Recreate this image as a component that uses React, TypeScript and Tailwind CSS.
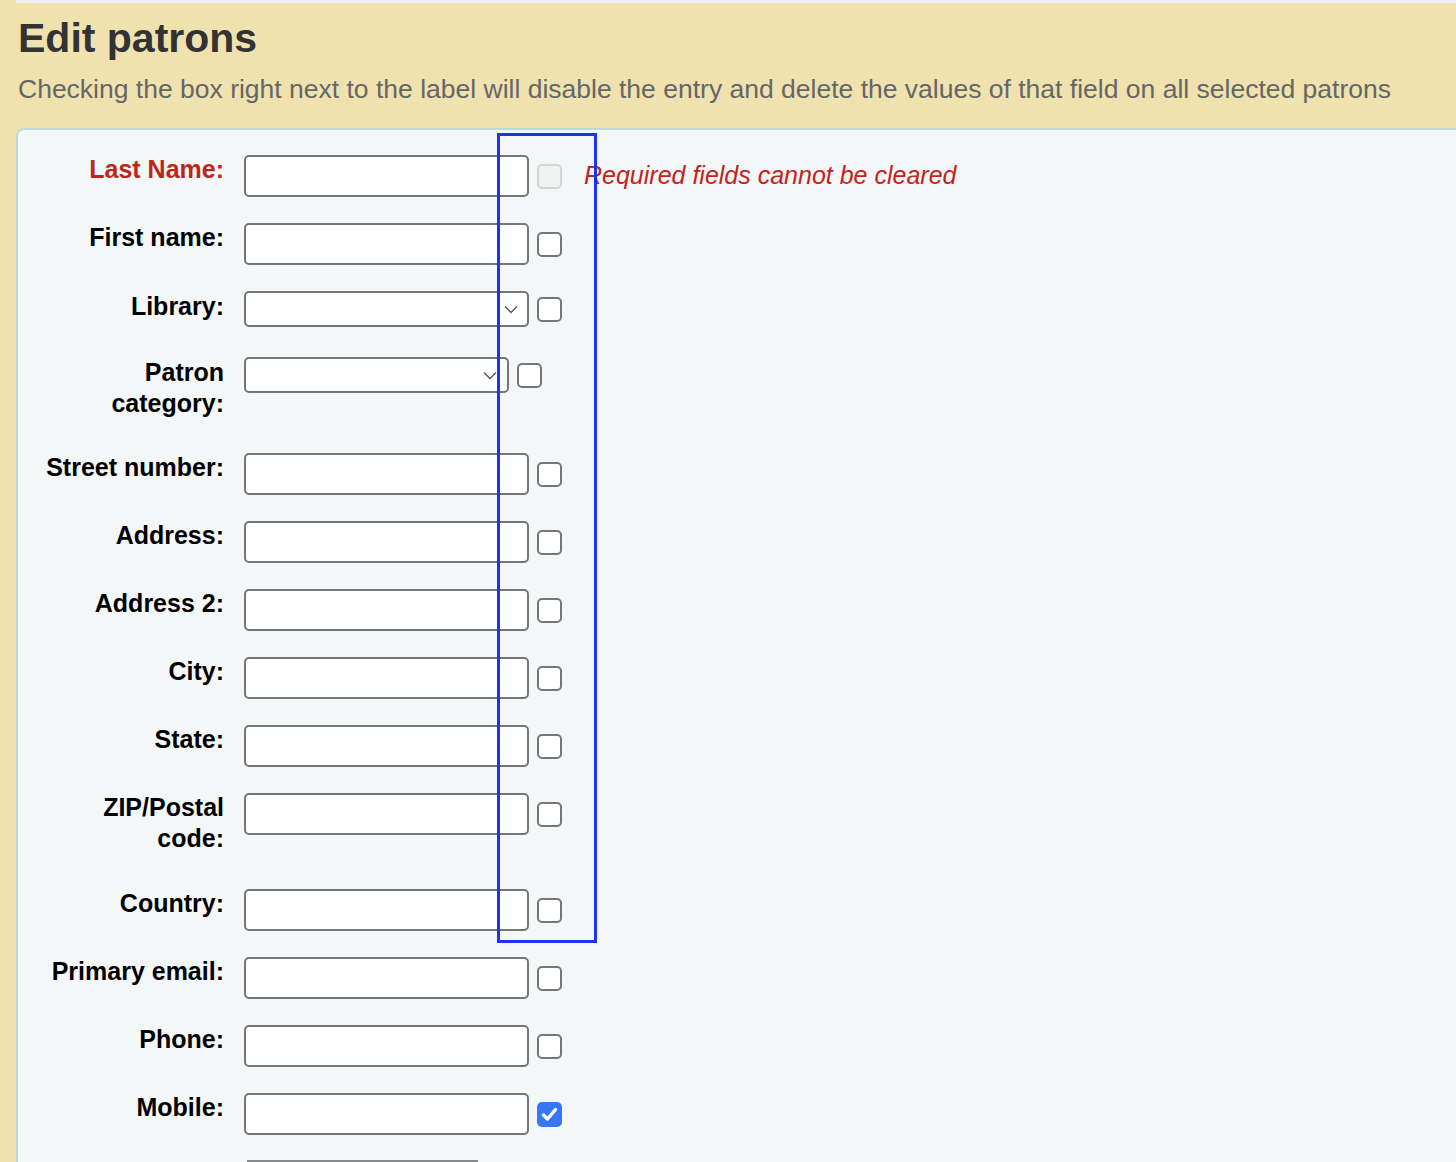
import React from 'react';

type Row = {
  label: React.ReactNode;
  kind: 'input' | 'select' | 'selectNarrow' | 'stub';
  pitch: string;
  box: 'off' | 'disabled' | 'on' | 'none';
  required?: boolean;
};

const rows: Row[] = [
  { label: 'Last Name:', kind: 'input', pitch: 'h-[68px]', box: 'disabled', required: true },
  { label: 'First name:', kind: 'input', pitch: 'h-[68px]', box: 'off' },
  { label: 'Library:', kind: 'select', pitch: 'h-[66px]', box: 'off' },
  { label: <>Patron<br />category:</>, kind: 'selectNarrow', pitch: 'h-[96px]', box: 'off' },
  { label: 'Street number:', kind: 'input', pitch: 'h-[68px]', box: 'off' },
  { label: 'Address:', kind: 'input', pitch: 'h-[68px]', box: 'off' },
  { label: 'Address 2:', kind: 'input', pitch: 'h-[68px]', box: 'off' },
  { label: 'City:', kind: 'input', pitch: 'h-[68px]', box: 'off' },
  { label: 'State:', kind: 'input', pitch: 'h-[68px]', box: 'off' },
  { label: <>ZIP/Postal<br />code:</>, kind: 'input', pitch: 'h-[96px]', box: 'off' },
  { label: 'Country:', kind: 'input', pitch: 'h-[68px]', box: 'off' },
  { label: 'Primary email:', kind: 'input', pitch: 'h-[68px]', box: 'off' },
  { label: 'Phone:', kind: 'input', pitch: 'h-[68px]', box: 'off' },
  { label: 'Mobile:', kind: 'input', pitch: 'h-[67px]', box: 'on' },
  { label: '', kind: 'stub', pitch: 'h-[68px]', box: 'none' },
];

function Chevron() {
  return (
    <svg width="14" height="9" viewBox="0 0 14 9" fill="none">
      <path d="M1 1.5 L7 7.5 L13 1.5" stroke="#555" strokeWidth="1.4" />
    </svg>
  );
}

function Checkbox({ state }: { state: Row['box'] }) {
  if (state === 'none') return null;
  if (state === 'on') {
    return (
      <div className="w-[25px] h-[25px] rounded-[5px] bg-[#3478f6] flex items-center justify-center shrink-0">
        <svg width="17" height="15" viewBox="0 0 17 15" fill="none">
          <path d="M2.5 8 L6.5 12 L14.5 2.5" stroke="#fff" strokeWidth="3.4" strokeLinecap="round" strokeLinejoin="round" />
        </svg>
      </div>
    );
  }
  if (state === 'disabled') {
    return <div className="w-[25px] h-[25px] rounded-[5px] border-2 border-[#d4d4d4] bg-[#f1f2f2] shrink-0" />;
  }
  return <div className="w-[25px] h-[25px] rounded-[5px] border-2 border-[#767676] bg-white shrink-0" />;
}

function Control({ kind }: { kind: Row['kind'] }) {
  if (kind === 'select') {
    return (
      <div className="w-[285px] h-[36px] rounded-[5px] border-2 border-[#767676] bg-white flex items-center justify-end pr-[9px] shrink-0">
        <Chevron />
      </div>
    );
  }
  if (kind === 'selectNarrow') {
    return (
      <div className="w-[265px] h-[36px] rounded-[5px] border-2 border-[#767676] bg-white flex items-center justify-end pr-[10px] shrink-0">
        <Chevron />
      </div>
    );
  }
  if (kind === 'stub') {
    return <div className="ml-[3px] w-[231px] h-[40px] border-t-2 border-[#888]" />;
  }
  return <div className="w-[285px] h-[42px] rounded-[5px] border-2 border-[#767676] bg-white shrink-0" />;
}

export default function App() {
  return (
    <div className="relative w-[1456px] h-[1162px] overflow-hidden bg-[#efe2ae] font-['Liberation_Sans',Arial,sans-serif]">
      <div className="ml-[16px] h-[3px] bg-[#efefef]" />

      <h1 className="mt-[11px] ml-[18px] text-[41px] leading-[48px] font-bold text-[#333]">Edit patrons</h1>
      <p className="mt-[12px] ml-[18px] text-[26.5px] leading-[30px] text-[#666] whitespace-nowrap">
        Checking the box right next to the label will disable the entry and delete the values of that field on all selected patrons
      </p>

      {/* form panel */}
      <div className="mt-[24px] ml-[16px] border-l-2 border-t-2 border-[#bdd9dc] rounded-tl-[8px] bg-[#f3f7f8] pt-[25px] h-[1100px]">
        {rows.map((row, i) => {
          const isSelect = row.kind === 'select' || row.kind === 'selectNarrow';
          return (
            <div key={i} className={`flex items-start ${row.pitch}`}>
              <div
                className={`w-[206px] shrink-0 text-right text-[25px] leading-[31px] font-bold ${
                  isSelect ? 'mt-0' : '-mt-[1px]'
                } ${row.required ? 'text-[#bf2519]' : 'text-black'}`}
              >
                {row.label}
              </div>
              <div className="ml-[20px] flex items-center gap-[8px]">
                <Control kind={row.kind} />
                <Checkbox state={row.box} />
                {row.required && (
                  <span className="ml-[14px] text-[25px] italic text-[#c4221a] whitespace-nowrap">
                    Required fields cannot be cleared
                  </span>
                )}
              </div>
            </div>
          );
        })}
      </div>

      {/* annotation highlight */}
      <div className="absolute left-[497px] top-[133px] w-[100px] h-[810px] border-[3px] border-[#1a34f4]" />
    </div>
  );
}
